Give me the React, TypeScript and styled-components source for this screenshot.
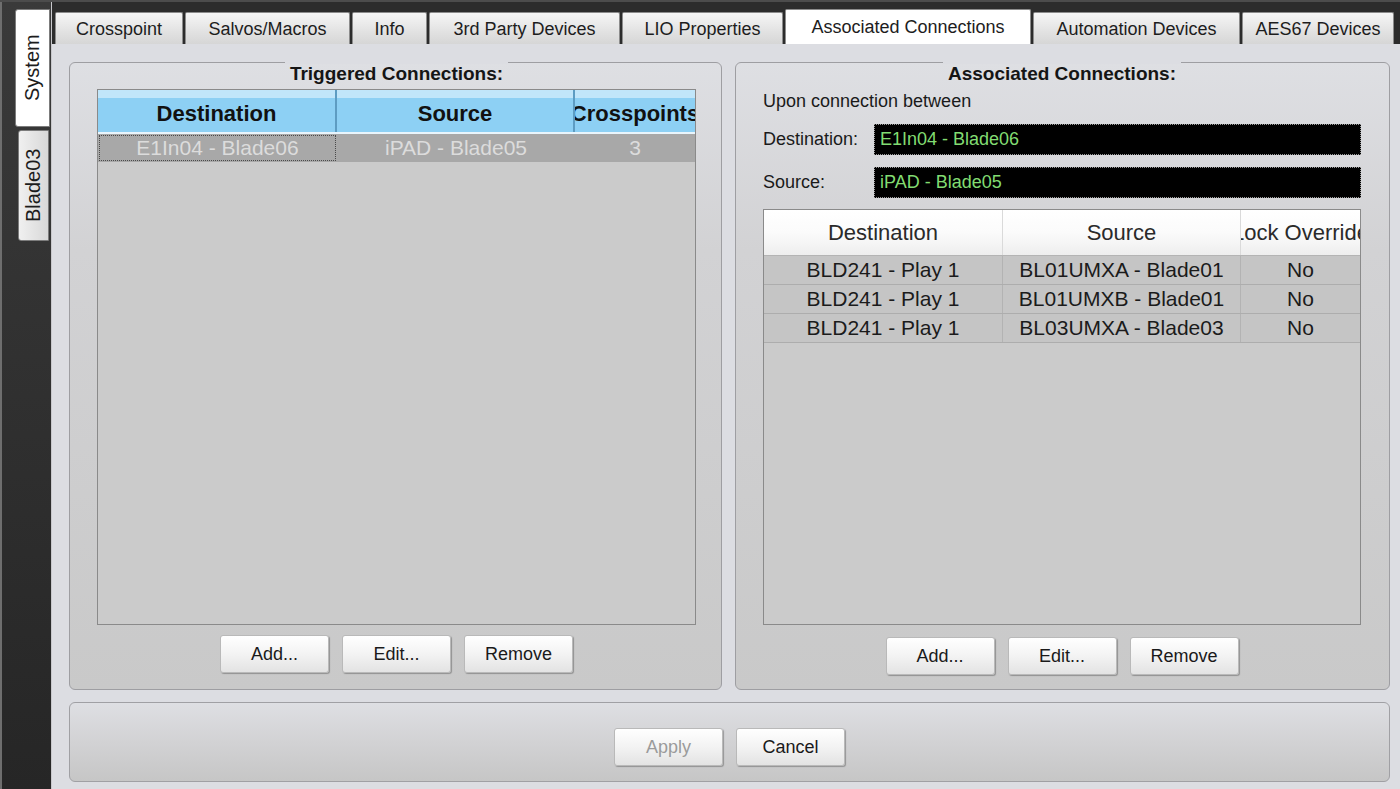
import React from 'react';
import styled, { createGlobalStyle } from 'styled-components';

const GlobalStyle = createGlobalStyle`
  html, body { margin: 0; padding: 0; width: 1400px; height: 789px; overflow: hidden; background: #2b2b2b; }
  body { font-family: "Liberation Sans", Arial, sans-serif; }
  * { box-sizing: border-box; }
`;

const Window = styled.div`
  width: 1400px;
  height: 789px;
  display: flex;
  background: #2c2c2c;
  border-top: 2px solid #4c4c4c;
`;

const Sidebar = styled.div`
  width: 52px;
  flex: none;
  display: flex;
  flex-direction: column;
  align-items: flex-end;
  gap: 3px;
  padding-top: 7px;
  padding-right: 1px;
  background: linear-gradient(to bottom, #3a3a3a, #262626);
  border-left: 2px solid #6e6e6e;
  border-right: 1px solid #c8c8cc;
`;

const VTab = styled.div<{ $active?: boolean; $w: number; $h: number }>`
  width: ${p => p.$w}px;
  height: ${p => p.$h}px;
  margin-right: ${p => (p.$active ? 0 : 1)}px;
  writing-mode: vertical-rl;
  transform: rotate(180deg);
  display: flex;
  align-items: center;
  justify-content: center;
  font-size: 20px;
  color: #1c1c1c;
  background: ${p => (p.$active ? '#ffffff' : 'linear-gradient(to left, #f0f0f0, #d8d8d8)')};
  border: 1px solid #7c7c7c;
  border-radius: 0 3px 3px 0;
`;

const Main = styled.div`
  flex: 1;
  display: flex;
  flex-direction: column;
  min-width: 0;
`;

const TabBar = styled.div`
  height: 42px;
  flex: none;
  display: flex;
  align-items: flex-end;
  gap: 2px;
  padding-left: 3px;
`;

const Tab = styled.div<{ $active?: boolean; $w: number }>`
  width: ${p => p.$w}px;
  height: ${p => (p.$active ? 35 : 32)}px;
  flex: none;
  display: flex;
  align-items: center;
  justify-content: center;
  padding-top: ${p => (p.$active ? 0 : 2)}px;
  font-size: 18px;
  color: #1d1d1d;
  white-space: nowrap;
  background: ${p => (p.$active ? '#ffffff' : 'linear-gradient(to bottom, #f6f6f6, #e2e2e2 60%, #d6d6d6)')};
  border: 1px solid #8c8c8c;
  border-bottom: none;
  border-radius: 2px 2px 0 0;
`;

const Content = styled.div`
  flex: 1;
  display: flex;
  flex-direction: column;
  gap: 12px;
  padding: 18px 10px 7px 17px;
  background: #dcdde2;
`;

const PanelsRow = styled.div`
  flex: 1;
  display: grid;
  grid-template-columns: 653px 655px;
  gap: 13px;
  min-height: 0;
`;

const Panel = styled.section<{ $padR: number; $padB: number }>`
  display: flex;
  flex-direction: column;
  padding: 0 ${p => p.$padR}px ${p => p.$padB}px 27px;
  border: 1px solid #9e9ea2;
  border-radius: 6px;
  background: linear-gradient(to bottom, #dedfe3 0%, #d2d2d4 30%, #c9c9c9 100%);
  min-height: 0;
`;

const Title = styled.div`
  align-self: center;
  margin-top: -1px;
  height: 22px;
  line-height: 24px;
  padding: 0 5px;
  font-size: 19px;
  font-weight: bold;
  color: #151515;
  background: linear-gradient(to bottom, #dcdde2 0, #dcdde2 2px, transparent 2px);
  white-space: nowrap;
`;

const Upon = styled.div`
  margin-top: 7px;
  height: 20px;
  line-height: 20px;
  font-size: 18px;
  color: #1a1a1a;
`;

const FieldRow = styled.div<{ $mt: number }>`
  margin-top: ${p => p.$mt}px;
  display: grid;
  grid-template-columns: 111px 1fr;
  align-items: center;
  height: 31px;
`;

const FieldLabel = styled.div`
  font-size: 18px;
  color: #1a1a1a;
`;

const Field = styled.div`
  height: 31px;
  line-height: 29px;
  padding-left: 5px;
  background: #000;
  border: 1px dotted #9a9a9a;
  color: #82dc72;
  font-size: 18px;
`;

const Table = styled.div<{ $mt: number }>`
  flex: 1;
  margin-top: ${p => p.$mt}px;
  border: 1px solid #8a8a8a;
  background: #cbcbcb;
  overflow: hidden;
  min-height: 0;
`;

const Row = styled.div`
  display: grid;
  grid-template-columns: 239px 238px 1fr;
`;

const BlueHead = styled(Row)`
  height: 44px;
  background: linear-gradient(to bottom, #c1e6fa 0, #c1e6fa 8px, #8dd0f4 8px, #8dd0f4 100%);
  border-bottom: 2px solid #e9f5fc;
`;

const BlueHeadCell = styled.div`
  display: flex;
  justify-content: center;
  align-items: center;
  padding-top: 6px;
  overflow: hidden;
  white-space: nowrap;
  font-size: 22px;
  font-weight: bold;
  color: #111;
  border-right: 2px solid #5d9cc2;
  &:last-child { border-right: none; }
`;

const SelRow = styled(Row)`
  height: 28px;
  background: #a8a8a8;
`;

const SelCell = styled.div<{ $focus?: boolean }>`
  display: flex;
  justify-content: center;
  align-items: center;
  white-space: nowrap;
  overflow: hidden;
  font-size: 21px;
  color: #dcdcdc;
  ${p => (p.$focus ? 'outline: 1px dotted #4a4a4a; outline-offset: -2px;' : '')}
`;

const WhiteHead = styled(Row)`
  height: 46px;
  background: linear-gradient(to bottom, #ffffff 0%, #fbfbfb 50%, #eeeeee 100%);
  border-bottom: 1px solid #b4b4b4;
`;

const WhiteHeadCell = styled.div`
  display: flex;
  justify-content: center;
  align-items: center;
  overflow: hidden;
  white-space: nowrap;
  font-size: 22px;
  color: #2a2a2a;
  border-right: 1px solid #dadada;
  &:last-child { border-right: none; }
`;

const BodyRow = styled(Row)`
  height: 29px;
  background: #c5c5c5;
  border-bottom: 1px solid #adadad;
`;

const BodyCell = styled.div`
  display: flex;
  justify-content: center;
  align-items: center;
  overflow: hidden;
  white-space: nowrap;
  font-size: 21px;
  color: #1b1b1b;
  border-right: 1px solid #b3b3b3;
  &:last-child { border-right: none; }
`;

const ButtonRow = styled.div<{ $mt: number }>`
  margin-top: ${p => p.$mt}px;
  display: flex;
  justify-content: center;
  gap: 13px;
`;

const Button = styled.button<{ $disabled?: boolean }>`
  width: 109px;
  height: 38px;
  padding: 0;
  font-family: "Liberation Sans", Arial, sans-serif;
  font-size: 18px;
  color: ${p => (p.$disabled ? '#9b9b9b' : '#1a1a1a')};
  background: linear-gradient(to bottom, #ffffff 0%, #f3f3f3 50%, #e3e3e3 100%);
  border: 1px solid #b9b9b9;
  border-radius: 3px;
  box-shadow: 1px 1px 1px rgba(0, 0, 0, 0.28);
`;

const BottomPanel = styled.div`
  height: 80px;
  flex: none;
  display: flex;
  justify-content: center;
  align-items: flex-end;
  gap: 13px;
  padding-bottom: 15px;
  border: 1px solid #a0a0a4;
  border-radius: 6px;
  background: linear-gradient(to bottom, #dedfe3 0%, #d2d2d4 50%, #c6c6c6 100%);
`;

const topTabs: { label: string; w: number; active?: boolean }[] = [
  { label: 'Crosspoint', w: 128 },
  { label: 'Salvos/Macros', w: 165 },
  { label: 'Info', w: 75 },
  { label: '3rd Party Devices', w: 191 },
  { label: 'LIO Properties', w: 161 },
  { label: 'Associated Connections', w: 246, active: true },
  { label: 'Automation Devices', w: 207 },
  { label: 'AES67 Devices', w: 152 },
];

const assoc = [
  ['BLD241 - Play 1', 'BL01UMXA - Blade01', 'No'],
  ['BLD241 - Play 1', 'BL01UMXB - Blade01', 'No'],
  ['BLD241 - Play 1', 'BL03UMXA - Blade03', 'No'],
];

export default function App() {
  return (
    <>
      <GlobalStyle />
      <Window>
        <Sidebar>
          <VTab $active $w={35} $h={118}>System</VTab>
          <VTab $w={31} $h={111}>Blade03</VTab>
        </Sidebar>
        <Main>
          <TabBar>
            {topTabs.map(t => (
              <Tab key={t.label} $w={t.w} $active={t.active}>{t.label}</Tab>
            ))}
          </TabBar>
          <Content>
            <PanelsRow>
              <Panel $padR={25} $padB={16}>
                <Title>Triggered Connections:</Title>
                <Table $mt={5}>
                  <BlueHead>
                    <BlueHeadCell>Destination</BlueHeadCell>
                    <BlueHeadCell>Source</BlueHeadCell>
                    <BlueHeadCell>Crosspoints</BlueHeadCell>
                  </BlueHead>
                  <SelRow>
                    <SelCell $focus>E1In04 - Blade06</SelCell>
                    <SelCell>iPAD - Blade05</SelCell>
                    <SelCell>3</SelCell>
                  </SelRow>
                </Table>
                <ButtonRow $mt={10}>
                  <Button>Add...</Button>
                  <Button>Edit...</Button>
                  <Button>Remove</Button>
                </ButtonRow>
              </Panel>
              <Panel $padR={28} $padB={14}>
                <Title>Associated Connections:</Title>
                <Upon>Upon connection between</Upon>
                <FieldRow $mt={13}>
                  <FieldLabel>Destination:</FieldLabel>
                  <Field>E1In04 - Blade06</Field>
                </FieldRow>
                <FieldRow $mt={12}>
                  <FieldLabel>Source:</FieldLabel>
                  <Field>iPAD - Blade05</Field>
                </FieldRow>
                <Table $mt={11}>
                  <WhiteHead>
                    <WhiteHeadCell>Destination</WhiteHeadCell>
                    <WhiteHeadCell>Source</WhiteHeadCell>
                    <WhiteHeadCell>Lock Override</WhiteHeadCell>
                  </WhiteHead>
                  {assoc.map((r, i) => (
                    <BodyRow key={i}>
                      {r.map((c, j) => (
                        <BodyCell key={j}>{c}</BodyCell>
                      ))}
                    </BodyRow>
                  ))}
                </Table>
                <ButtonRow $mt={12}>
                  <Button>Add...</Button>
                  <Button>Edit...</Button>
                  <Button>Remove</Button>
                </ButtonRow>
              </Panel>
            </PanelsRow>
            <BottomPanel>
              <Button $disabled>Apply</Button>
              <Button>Cancel</Button>
            </BottomPanel>
          </Content>
        </Main>
      </Window>
    </>
  );
}
